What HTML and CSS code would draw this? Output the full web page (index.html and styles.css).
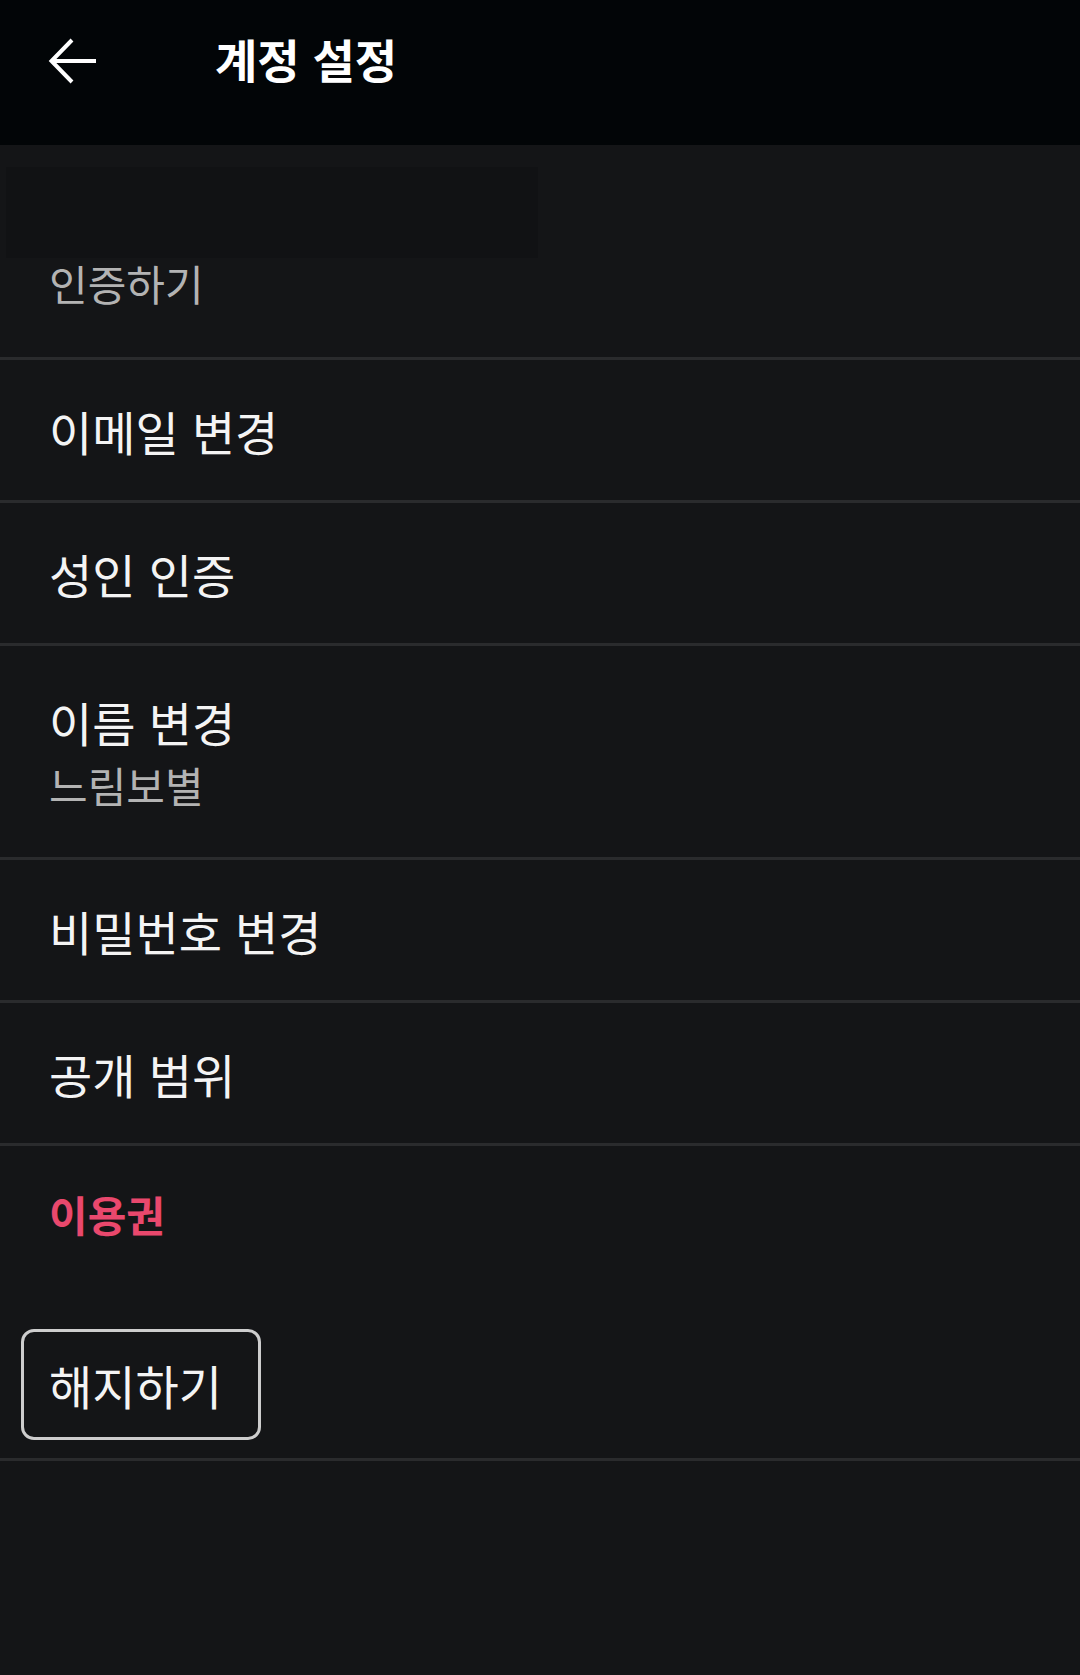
FILE: index.html
```html
<!DOCTYPE html>
<html lang="ko">
<head>
<meta charset="utf-8">
<title>계정 설정</title>
<link rel="stylesheet" href="styles.css">
</head>
<body>
<div class="app">
  <header class="topbar">
    <svg class="back" width="48" height="46" viewBox="0 0 48 46" aria-hidden="true">
      <path d="M4 23 H48" stroke="#fff" stroke-width="4" fill="none"/>
      <path d="M24 2 L3.5 23 L24 44" stroke="#fff" stroke-width="4" fill="none" stroke-linejoin="miter"/>
    </svg>
    <h1 class="title">계정 설정</h1>
  </header>

  <section class="row verify">
    <div class="placeholder"></div>
    <div class="sub">인증하기</div>
  </section>

  <div class="row item"><div class="label">이메일 변경</div></div>
  <div class="row item"><div class="label">성인 인증</div></div>
  <div class="row item tall">
    <div class="label">이름 변경</div>
    <div class="sub name">느림보별</div>
  </div>
  <div class="row item"><div class="label">비밀번호 변경</div></div>
  <div class="row item"><div class="label">공개 범위</div></div>

  <section class="row plan">
    <div class="plan-title">이용권</div>
    <div class="cancel"><span class="cancel-label">해지하기</span></div>
  </section>
</div>
</body>
</html>
```

FILE: styles.css
```css
* { box-sizing: border-box; margin: 0; padding: 0; }

html, body {
  background: #141517;
}

body {
  width: 1080px;
  min-height: 1675px;
  font-family: "Noto Sans CJK KR", "Noto Sans", sans-serif;
  color: #f4f4f4;
}

.app {
  display: flex;
  flex-direction: column;
}

.topbar {
  height: 145px;
  background: #020507;
  display: flex;
  align-items: flex-start;
}

.back {
  margin-left: 48px;
  margin-top: 38px;
  flex: none;
}

.title {
  margin-left: 119px;
  margin-top: 35px;
  font-size: 46px;
  line-height: 46px;
  font-weight: 700;
  letter-spacing: 0;
  color: #fff;
}

.row {
  border-bottom: 3px solid #2a2b2d;
  display: flex;
  flex-direction: column;
}

.verify {
  height: 215px;
  padding-top: 22px;
}

.placeholder {
  margin-left: 6px;
  width: 532px;
  height: 91px;
  background: #111214;
}

.sub {
  font-size: 42px;
  line-height: 42px;
  color: #b3b3b3;
  padding-left: 49px;
}

.verify .sub {
  margin-top: 4px;
}

.item {
  height: 143px;
  justify-content: center;
  padding-left: 49px;
}

.item .sub {
  padding-left: 0;
}

.item.tall {
  height: 214px;
}

.name {
  margin-top: 19px;
}

.label {
  font-size: 47px;
  line-height: 47px;
  color: #f4f4f4;
}

.plan {
  height: 315px;
  padding-top: 47px;
}

.plan-title {
  padding-left: 49px;
  font-size: 42px;
  line-height: 42px;
  font-weight: 700;
  color: #e9486d;
}

.cancel {
  margin-top: 94px;
  margin-left: 21px;
  width: 240px;
  height: 111px;
  border: 3px solid #cdcdcd;
  border-radius: 13px;
  display: flex;
  align-items: center;
  padding-left: 25px;
}

.cancel-label {
  font-size: 47px;
  line-height: 47px;
  color: #f4f4f4;
}
```
